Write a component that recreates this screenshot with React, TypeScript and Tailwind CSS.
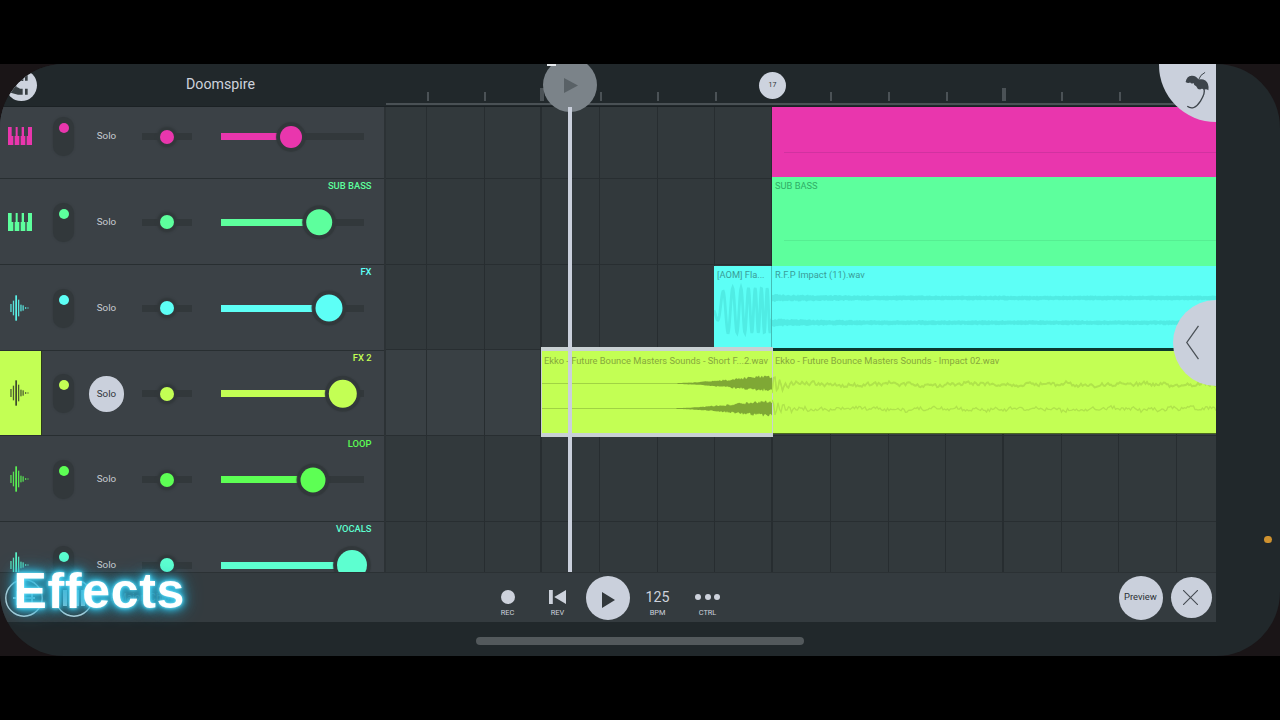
import React from "react";

type IconKind = "piano" | "wave";

interface Track {
  name: string;
  kind: IconKind;
  color: string;
  knobX: number;
  knobSize: number;
  solo?: boolean;
}

const TRACKS: Track[] = [
  { name: "", kind: "piano", color: "#e936ad", knobX: 70, knobSize: 22 },
  { name: "SUB BASS", kind: "piano", color: "#5dff9d", knobX: 98.3, knobSize: 25.6 },
  { name: "FX", kind: "wave", color: "#5dfff6", knobX: 108.5, knobSize: 27 },
  { name: "FX 2", kind: "wave", color: "#c3ff54", knobX: 122, knobSize: 28.4, solo: true },
  { name: "LOOP", kind: "wave", color: "#5dff54", knobX: 92.3, knobSize: 25 },
  { name: "VOCALS", kind: "wave", color: "#5dffd0", knobX: 131.7, knobSize: 30 },
];

function noise(i: number, seed: number) {
  const v = Math.sin(i * 12.9898 + seed * 78.233) * 43758.5453;
  return v - Math.floor(v);
}

function band(width: number, cy: number, amp: (t: number) => number, seed: number, step = 1) {
  const top: string[] = [];
  const bottom: string[] = [];
  for (let x = 0; x <= width; x += step) {
    const a = amp(x / width);
    top.push(`${x},${(cy - a * (0.65 + 0.5 * noise(x, seed)) - 0.3).toFixed(2)}`);
    bottom.unshift(`${x},${(cy + a * (0.65 + 0.5 * noise(x, seed + 9)) + 0.3).toFixed(2)}`);
  }
  return `M${top.join("L")}L${bottom.join("L")}Z`;
}

function wiggle(width: number, cy: number, seed: number) {
  const pts: string[] = [];
  for (let x = 0; x <= width; x += 1.5) {
    const burst = 11 * Math.exp(-x / 12);
    const swing = burst * Math.sin(x * 1.15 + seed);
    const slow = Math.sin(x / 13 + seed) * 0.9 + Math.sin(x / 3.1 + seed * 2) * 0.9;
    pts.push(`${x},${(cy + slow + swing + (noise(x, seed) - 0.5) * 3.6).toFixed(2)}`);
  }
  return `M${pts.join("L")}`;
}

const RISE = (t: number) => (t < 0.57 ? 0 : Math.min(6.8, Math.pow((t - 0.57) / 0.36, 1.5) * 6.8));
const IMPACT = (t: number) => 2 + 1.6 * Math.exp(-t * 9);

function flanger() {
  let d = "M0,46";
  for (let x = 0; x <= 58; x += 0.5) {
    const t = x / 58;
    const amp = Math.min(23, 4 + x * 1.7);
    const phase = 2 * Math.PI * (3.6 * t + 2.6 * t * t) * 1.2;
    d += `L${x},${(44.5 + amp * Math.sin(phase)).toFixed(2)}`;
  }
  return d;
}

function TrackIcon({ kind, color }: { kind: IconKind; color: string }) {
  if (kind === "piano") {
    return (
      <svg className="ml-[8.3px] h-[18px] w-6" viewBox="0 0 72 54" fill={color}>
        <path d="M0 0H11V27H16V54H0Z" />
        <path d="M23 0H29V27H34V54H20V27H23Z" />
        <path d="M41 0H48V27H52V54H38V27H41Z" />
        <path d="M60 0H72V54H56V27H60Z" />
      </svg>
    );
  }
  const bars = [24, 44, 76, 50, 20, 16, 5, 3];
  const xs = [3, 10.5, 18, 26, 33, 39.5, 47, 54];
  return (
    <svg className="ml-[9.7px] h-[26px] w-5" viewBox="0 0 60 78" fill={color}>
      {bars.map((h, i) => (
        <rect key={i} x={xs[i] - 2} y={39 - h / 2} width={i === 2 ? 4.8 : 3.8} height={h} opacity={i === 2 ? 1 : 0.85} />
      ))}
    </svg>
  );
}

function TrackRow({ track }: { track: Track }) {
  const { color, solo } = track;
  return (
    <div className="relative flex h-[85.75px] shrink-0 items-center border-b border-[#282e31] bg-[#3b4146]">
      <div
        className={`flex h-full w-[42px] shrink-0 items-center pt-[1px] ${solo ? "border-r border-[#2b3a1c]" : ""}`}
        style={solo ? { backgroundColor: color } : undefined}
      >
        <TrackIcon kind={track.kind} color={solo ? "#36402a" : color} />
      </div>
      <div className="flex items-center pt-[2px]">
        <div className="ml-[11.3px] flex h-[39px] w-[21px] shrink-0 justify-center rounded-full bg-[#32383b] pt-[6px] shadow-[0_0_2px_#32383b]">
          <div className="size-[10px] rounded-full" style={{ backgroundColor: color }} />
        </div>
        <div
          className={`ml-[14.4px] flex size-[35.5px] shrink-0 items-center justify-center rounded-full text-[9.8px] ${
            solo ? "bg-[#cad0dc] text-[#30363a]" : "text-[#c8ccd4]"
          }`}
        >
          <span>Solo</span>
        </div>
        <div className="ml-[18px] flex h-[7px] w-[50px] shrink-0 items-center justify-center bg-[#32383b]">
          <div
            className="size-[14px] shrink-0 rounded-full shadow-[0_0_2px_3.5px_#32383b]"
            style={{ backgroundColor: color }}
          />
        </div>
        <div className="relative ml-[28.6px] flex h-[7px] w-[143px] shrink-0 bg-[#32383b]">
          <div style={{ backgroundColor: color, width: track.knobX - track.knobSize / 2 }} />
          <div
            className="absolute top-1/2 -translate-x-1/2 -translate-y-1/2 rounded-full shadow-[0_0_1px_4px_#32383b]"
            style={{ backgroundColor: color, left: track.knobX, width: track.knobSize, height: track.knobSize }}
          />
        </div>
      </div>
      <div className="absolute top-[1.2px] right-[12.5px] text-[9.4px] leading-3 font-medium" style={{ color }}>
        {track.name}
      </div>
    </div>
  );
}

function Ruler() {
  const ticks = Array.from({ length: 13 }, (_, i) => i);
  return (
    <div className="relative flex-1">
      <div className="flex h-[37px] items-end pl-[40.6px]">
        {ticks.map((i) => (
          <div key={i} className="flex w-[57.7px] shrink-0 items-end">
            {i === 6 ? null : (
              <div className={i === 2 || i === 10 ? "-ml-[1.5px] h-[13px] w-1 bg-[#4b5256]" : "h-[9px] w-[2px] bg-[#4b5256]"} />
            )}
          </div>
        ))}
      </div>
      <div className="mt-[1.5px] h-[2px] bg-[#4a5155]" />
      <div className="absolute top-[7.5px] left-[373px] flex size-[27px] items-center justify-center rounded-full bg-[#cdd3de] text-[7px] text-[#2d3337]">
        17
      </div>
    </div>
  );
}

function ClipLabel({ className, children }: { className: string; children: string }) {
  return <div className={`px-[3px] text-[9.3px] leading-3 whitespace-nowrap ${className}`}>{children}</div>;
}

function Timeline() {
  return (
    <div className="relative flex-1 overflow-hidden bg-[#32393c]">
      <div className="absolute inset-0 -mt-[14px] flex flex-col">
        {TRACKS.map((t, i) => (
          <div key={i} className={`h-[85.75px] shrink-0 border-b border-[#282e31] ${t.solo ? "bg-[#394044]" : ""}`} />
        ))}
      </div>
      <div className="absolute inset-0 flex">
        <div className="w-[41px] shrink-0 border-r border-[#282e31]" />
        {Array.from({ length: 13 }, (_, i) => (
          <div
            key={i}
            className={`w-[57.7px] shrink-0 border-[#272d30] ${i === 1 || i === 5 || i === 9 ? "border-r-2" : "border-r"}`}
          />
        ))}
      </div>
      <div className="relative flex flex-col items-end">
        <div className="h-[70px] w-[444px] bg-[#e936ad] pt-[45px]">
          <div className="ml-3 h-px bg-[#d132a0]" />
        </div>
        <div className="h-[89px] w-[444px] bg-[#5dff9d] pt-[3px]">
          <ClipLabel className="text-[#2fae66]">SUB BASS</ClipLabel>
          <div className="mt-[48px] ml-3 h-px bg-[#56ee92]" />
        </div>
        <div className="flex h-[81.5px] w-[502px] bg-[#5dfff6]">
          <div className="relative w-[58px] border-r border-[#45bdb6] pt-[3px]">
            <ClipLabel className="text-[#3a9d98]">[AOM] Fla...</ClipLabel>
            <svg className="absolute top-0 left-0 h-[81px] w-[57px]" viewBox="0 0 58 81">
              <path d={flanger()} fill="none" stroke="#50ece4" strokeWidth="2.8" />
            </svg>
          </div>
          <div className="relative flex-1 pt-[3px]">
            <ClipLabel className="text-[#3a9d98]">R.F.P Impact (11).wav</ClipLabel>
            <svg className="absolute top-0 left-0 h-[81px] w-[444px]" viewBox="0 0 444 81" fill="#50ebe3">
              <path d={band(444, 32, IMPACT, 3)} />
              <path d={band(444, 56.7, IMPACT, 5)} />
            </svg>
          </div>
        </div>
        <div className="h-[3px] w-[444px] bg-[#0c3a30]" />
        <div className="flex h-[83.5px] w-[675px] border-b border-[#4b6a1e] bg-[#c3ff54]">
          <div className="relative w-[231px] pt-[4px]">
            <ClipLabel className="text-[#86a83c]">Ekko - Future Bounce Masters Sounds - Short F...2.wav</ClipLabel>
            <svg className="absolute top-0 left-0 h-[83px] w-[231px]" viewBox="0 0 231 83" fill="#7fa835">
              <path d={band(231, 32.5, RISE, 11)} />
              <path d={band(231, 57.5, RISE, 17)} />
            </svg>
            <div className="absolute -top-[4px] -right-[1px] -bottom-[4px] left-0 border-x border-y-[4px] border-[#c9d1d3]" />
          </div>
          <div className="relative flex-1 pt-[4px]">
            <ClipLabel className="text-[#86a83c]">Ekko - Future Bounce Masters Sounds - Impact 02.wav</ClipLabel>
            <svg
              className="absolute top-0 left-0 h-[83px] w-[444px]"
              viewBox="0 0 444 83"
              fill="none"
              stroke="#afe34b"
              strokeWidth="1.3"
            >
              <path d={wiggle(444, 33, 2)} />
              <path d={wiggle(444, 33.8, 2)} />
              <path d={wiggle(444, 58, 4)} />
            </svg>
          </div>
        </div>
      </div>
      <div className="absolute top-0 bottom-0 left-[182px] w-[4px] bg-[#cad0dc]" />
    </div>
  );
}

function TransportItem({ label, children }: { label: string; children: React.ReactNode }) {
  return (
    <div className="flex w-[50px] flex-col items-center pt-[9px] text-[#cdd2dc]">
      <div className="flex h-5 items-center justify-center">{children}</div>
      <div className="mt-[2px] text-[7.4px] leading-2">{label}</div>
    </div>
  );
}

function Toolbar() {
  return (
    <div className="relative flex h-[50px] shrink-0 items-center border-t border-[#2b3134] bg-[#343b3f]">
      <div className="flex w-[482.5px] items-center pl-[5px]">
        <svg className="size-[38px]" viewBox="0 0 38 38" fill="none" stroke="#bfd6de" strokeWidth="1.4">
          <circle cx="19" cy="19" r="18.2" />
          <path d="M8 19h22M12 12v14M27 13v12" strokeWidth="2" />
        </svg>
        <svg className="ml-3 size-[38px]" viewBox="0 0 38 38" fill="none" stroke="#bfd6de" strokeWidth="1.4">
          <circle cx="19" cy="19" r="18.2" />
          <path d="M10 11v16M16 11v16M22 11v16M28 11v16" strokeWidth="4" />
        </svg>
        <span className="ml-[17px] text-[10px] text-[#5b747d]">F Major (Chip)</span>
      </div>
      <TransportItem label="REC">
        <div className="size-[14px] rounded-full bg-[#cdd2dc]" />
      </TransportItem>
      <TransportItem label="REV">
        <svg className="h-[14px] w-[17px]" viewBox="0 0 17 14" fill="#cdd2dc">
          <path d="M0 0H3.8V14H0ZM17 0V14L5.2 7Z" />
        </svg>
      </TransportItem>
      <div className="flex w-[50px] justify-center">
        <div className="flex size-11 items-center justify-center rounded-full bg-[#cad0dc]">
          <svg className="mt-1 ml-[2px] h-4 w-[13px]" viewBox="0 0 13 16" fill="#32383c">
            <path d="M0 0L13 8L0 16Z" />
          </svg>
        </div>
      </div>
      <TransportItem label="BPM">
        <span className="text-[14.2px] leading-5">125</span>
      </TransportItem>
      <TransportItem label="CTRL">
        <div className="flex gap-[3.6px]">
          <div className="size-[6px] rounded-full bg-[#cdd2dc]" />
          <div className="size-[6px] rounded-full bg-[#cdd2dc]" />
          <div className="size-[6px] rounded-full bg-[#cdd2dc]" />
        </div>
      </TransportItem>
      <div className="ml-auto flex items-center gap-2 pr-[4.5px]">
        <div className="flex size-11 items-center justify-center rounded-full bg-[#cad0dc] text-[9.4px] text-[#2b3135]">
          Preview
        </div>
        <div className="flex size-[41px] items-center justify-center rounded-full bg-[#cad0dc]">
          <svg className="-ml-[2px] size-[15px]" viewBox="0 0 15 15" stroke="#454b51" strokeWidth="1.1">
            <path d="M0 0L15 15M15 0L0 15" />
          </svg>
        </div>
      </div>
      <div className="absolute -top-[7px] left-[13.5px] font-['Liberation_Sans',sans-serif] text-[50px] leading-[50px] font-bold tracking-[0.7px] text-white [text-shadow:0_0_3px_#7beaff,0_0_6px_#35c8ee,0_0_10px_#2fb9de,0_0_14px_#2fb9de,0_0_20px_#2596b8]">
        Effects
      </div>
    </div>
  );
}

function Logo() {
  return (
    <svg className="absolute top-0 left-0 h-14 w-20" viewBox="0 12 240 168">
      <circle cx="64" cy="76" r="47" fill="#cdd3de" />
      <path d="M75 45h8v17h-8zM75 86h8v18h-8z" fill="#373e42" />
      <path d="M70 45v18h-10q-8 1 -12 9q2 10 12 14h8v18h-14q-18 -2 -32 -12q14 -34 48 -47z" fill="#373e42" />
      <path d="M46 66h26v16H50z" fill="#cdd3de" />
    </svg>
  );
}

function Header() {
  return (
    <div className="relative flex h-[43px] shrink-0 border-b border-[#1b2124] bg-[#21282b]">
      <Logo />
      <div className="flex w-[386px] shrink-0 items-center justify-center pr-[1px] pl-[56px] text-[14.2px] text-[#cdd2dc]">
        <span>Doomspire</span>
      </div>
      <Ruler />
    </div>
  );
}

export default function App() {
  return (
    <div className="h-[720px] w-[1280px] overflow-hidden bg-black py-16 font-[Roboto,'Noto_Sans',sans-serif]">
      <div className="h-[592px] bg-[#1a1517]">
        <div className="relative flex h-full flex-col items-start overflow-hidden rounded-[64px] bg-[#21282b]">
          <div className="relative flex h-[558px] w-[1216px] flex-col">
            <Header />
            <div className="flex h-[465px] shrink-0">
              <div className="w-[386px] shrink-0 overflow-hidden border-r-2 border-[#2c3235] bg-[#3b4146]">
                <div className="-mt-[13.7px] flex flex-col">
                  {TRACKS.map((t, i) => (
                    <TrackRow key={i} track={t} />
                  ))}
                </div>
              </div>
              <Timeline />
            </div>
            <Toolbar />
            <div className="absolute top-[-6px] left-[543px] flex size-[54px] items-center justify-center rounded-full bg-[#7b8389]">
              <svg className="ml-[2px] h-[15px] w-[14px]" viewBox="0 0 14 15" fill="#596166">
                <path d="M0 0L14 7.5L0 15Z" />
              </svg>
            </div>
            <div className="absolute top-0 left-[547px] h-[2px] w-[9px] bg-[#e6eaee]" />
            <div className="absolute top-[43px] left-[568px] h-[6px] w-[4px] bg-[#cad0dc]" />
            <div className="absolute top-0 right-0 size-[57.5px] rounded-bl-full bg-[#cad0dc]">
              <svg className="absolute right-[2.5px] bottom-[10px] h-[43px] w-[33px]" viewBox="1200 25 100 130">
                <path
                  d="M1214 64Q1217 46 1232 45Q1246 44 1253 57Q1264 53 1274 60Q1286 69 1283 89Q1276 84 1270 88Q1264 82 1258 87Q1249 86 1246 77Q1239 75 1238 67Q1231 71 1228 66Q1220 69 1214 64Z"
                  fill="#3d444b"
                />
                <path d="M1253 58Q1258 42 1273 35" fill="none" stroke="#3d444b" strokeWidth="3" />
                <path d="M1269 84Q1275 97 1259 122Q1239 153 1219 138" fill="none" stroke="#3d444b" strokeWidth="4" />
              </svg>
            </div>
            <div className="absolute top-[235.5px] right-0 flex h-[86px] w-[43px] items-center rounded-l-full bg-[#cad0dc]">
              <svg className="ml-[13px] h-[35px] w-[13px]" viewBox="0 0 13 35" fill="none" stroke="#4a5056" strokeWidth="1.3">
                <path d="M12.5 0.8L0.8 17.5L12.5 34.2" />
              </svg>
            </div>
          </div>
          <div className="mt-[15px] h-[7.5px] w-[328px] self-center rounded-full bg-[#53595c]" />
          <div className="absolute top-[471.5px] right-[8.5px] size-[7.5px] rounded-full bg-[#cf922f]" />
        </div>
      </div>
    </div>
  );
}
